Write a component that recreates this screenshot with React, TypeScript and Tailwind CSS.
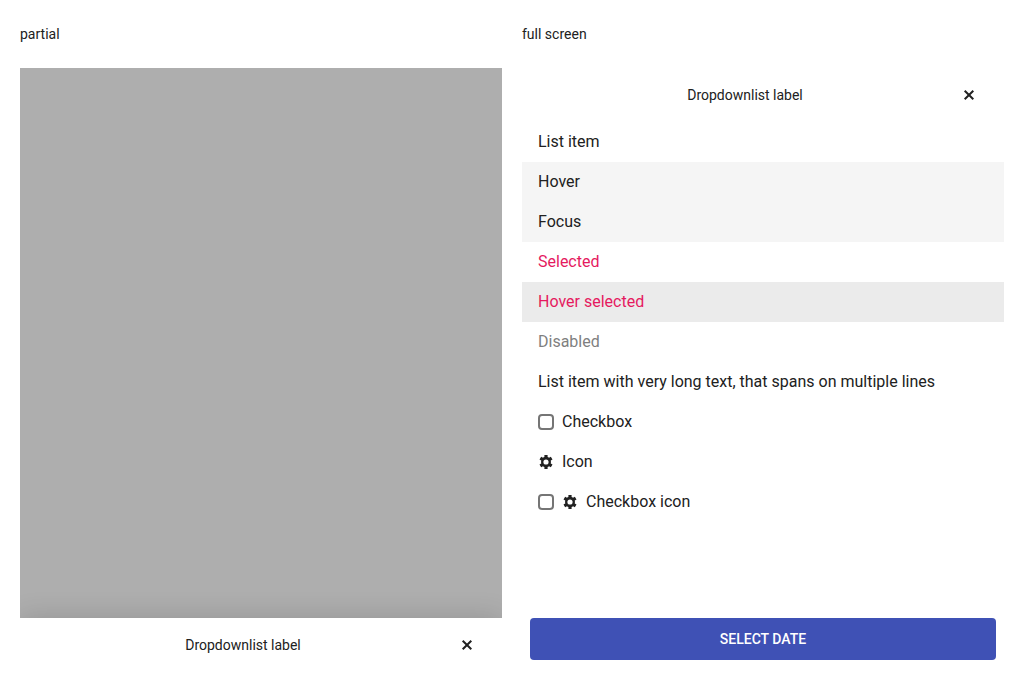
const gear =
  "M6.4 1h3.2v2.05c.53.17 1 .42 1.4.75l1.85-1.07 1.65 2.82-1.75 1.03a5 5 0 0 1 0 2.84l1.75 1.03-1.65 2.82L11 12.2c-.4.33-.87.58-1.4.75V15H6.4v-2.05a4.9 4.9 0 0 1-1.4-.75l-1.85 1.07L1.5 10.45l1.75-1.03a5 5 0 0 1 0-2.84L1.5 5.55l1.65-2.82L5 3.8c.4-.33.87-.58 1.4-.75zM8 5.4a2.6 2.6 0 1 0 0 5.2 2.6 2.6 0 0 0 0-5.2z";

function GearIcon() {
  return (
    <svg viewBox="0 0 16 16" className="size-4 shrink-0" fill="currentColor" fillRule="evenodd" aria-hidden="true">
      <path d={gear} />
    </svg>
  );
}

function SheetHeader({ title }: { title: string }) {
  return (
    <header className="flex items-center gap-2 py-3 pr-5 pl-[22px]">
      <h2 className="grow text-center text-sm">{title}</h2>
      <button type="button" aria-label="Close" className="flex size-[30px] shrink-0 items-center justify-center">
        <svg viewBox="0 0 16 16" className="size-4" fill="none" stroke="currentColor" strokeWidth="2" aria-hidden="true">
          <path d="M3.7 3.7l8.6 8.6M12.3 3.7l-8.6 8.6" />
        </svg>
      </button>
    </header>
  );
}

type Item = { text: string; tone?: string; checkbox?: boolean; icon?: boolean };

const items: Item[] = [
  { text: "List item" },
  { text: "Hover", tone: "bg-[#f5f5f5]" },
  { text: "Focus", tone: "bg-[#f5f5f5]" },
  { text: "Selected", tone: "text-[#e51a5f]" },
  { text: "Hover selected", tone: "bg-[#ebebeb] text-[#e51a5f]" },
  { text: "Disabled", tone: "text-[#7f7f7f]" },
  { text: "List item with very long text, that spans on multiple lines" },
  { text: "Checkbox", checkbox: true },
  { text: "Icon", icon: true },
  { text: "Checkbox icon", checkbox: true, icon: true },
];

function ListItem({ text, tone = "", checkbox, icon }: Item) {
  const Row = checkbox ? "label" : "div";
  return (
    <li className={tone}>
      <Row className="flex items-center gap-2 px-4 py-2">
        {checkbox && (
          <input
            type="checkbox"
            className="size-4 shrink-0 appearance-none rounded border-2 border-[#757575] bg-white checked:bg-[#e51a5f]"
          />
        )}
        {icon && <GearIcon />}
        <span>{text}</span>
      </Row>
    </li>
  );
}

export default function App() {
  return (
    <main className="grid min-h-screen grid-cols-2 gap-5 bg-white px-5 pt-6 pb-4 font-['Roboto',sans-serif] text-base text-[#212121]">
      <section className="flex flex-col gap-6">
        <h1 className="text-sm">partial</h1>
        <div className="flex grow flex-col overflow-hidden bg-[#aeaeae]">
          <div className="grow" />
          <div className="bg-white shadow-[0_0_28px_rgba(0,0,0,0.16)]">
            <SheetHeader title="Dropdownlist label" />
          </div>
        </div>
      </section>
      <section className="flex flex-col gap-6">
        <h1 className="text-sm">full screen</h1>
        <div className="flex grow flex-col">
          <SheetHeader title="Dropdownlist label" />
          <ul className="grow">
            {items.map((item) => (
              <ListItem key={item.text} {...item} />
            ))}
          </ul>
          <footer className="px-2 pb-3">
            <button type="button" className="w-full rounded bg-[#3f51b5] py-[11px] text-sm font-medium text-white uppercase">
              Select date
            </button>
          </footer>
        </div>
      </section>
    </main>
  );
}
